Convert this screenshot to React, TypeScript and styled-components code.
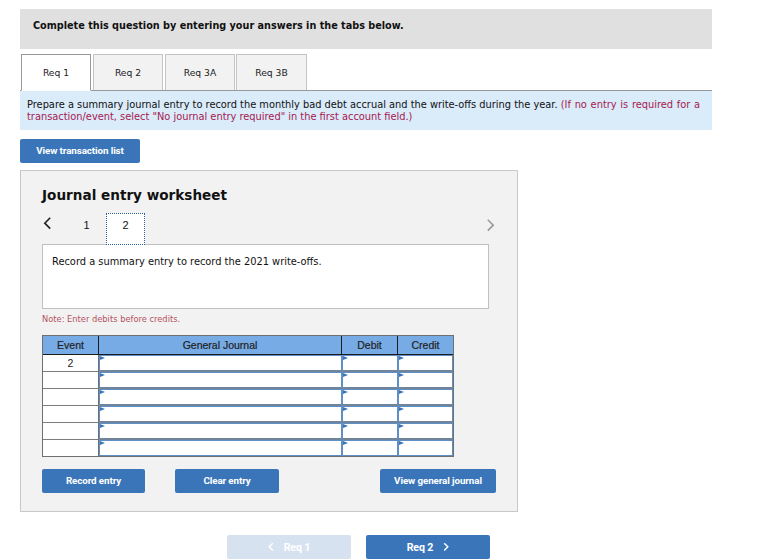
import React from "react";
import styled, { createGlobalStyle } from "styled-components";

const Global = createGlobalStyle`
  html, body { margin: 0; padding: 0; background: #fff; }
  body { font-family: "DejaVu Sans", Verdana, sans-serif; color: #111; }
`;

const Page = styled.div`
  width: 692px;
  padding: 9px 0 0 20px;
`;

const Banner = styled.div`
  height: 40px;
  box-sizing: border-box;
  background: #e0e0e0;
  padding: 10px 13px;
  font-size: 9.69px;
  line-height: 13px;
  font-weight: 700;
  white-space: nowrap;
`;

const TabBar = styled.div`
  display: flex;
  gap: 2px;
  margin-top: 5px;
  padding-left: 1px;
  height: 37px;
  box-sizing: border-box;
  border-bottom: 1px solid #999;
`;

const Tab = styled.div<{ $active?: boolean; $w: number; $tight?: boolean }>`
  width: ${(p) => p.$w}px;
  margin-left: ${(p) => (p.$tight ? "-1px" : "0")};
  box-sizing: border-box;
  display: flex;
  align-items: center;
  justify-content: center;
  font-size: 9.2px;
  color: #222;
  background: ${(p) => (p.$active ? "#fff" : "#f2f2f2")};
  border: 1px solid ${(p) => (p.$active ? "#999" : "#c4c4c4")};
  border-bottom: ${(p) => (p.$active ? "1px solid #fff" : "none")};
  height: ${(p) => (p.$active ? "37px" : "36px")};
`;

const Instructions = styled.div`
  background: #daebfa;
  height: 39px;
  box-sizing: border-box;
  padding: 8px 7px 0;
  font-size: 9.83px;
  line-height: 12px;
  white-space: nowrap;
`;

const Red = styled.span`
  color: #a5204e;
`;

const RedLead = styled.span`
  word-spacing: 0.6px;
`;

const Button = styled.button<{ $w: number; $disabled?: boolean; $nav?: boolean }>`
  width: ${(p) => p.$w}px;
  height: 24px;
  padding: ${(p) => (p.$nav ? "0" : "0 0 2px")};
  border: none;
  border-radius: 2px;
  background: ${(p) => (p.$disabled ? "#d7e2f1" : "#3a75b9")};
  color: #fff;
  font-family: "Roboto", "Liberation Sans", sans-serif;
  font-weight: 700;
  font-size: ${(p) => (p.$nav ? "10.6px" : "9.8px")};
  letter-spacing: -0.1px;
  display: flex;
  align-items: center;
  justify-content: center;
  gap: 10px;
`;

const ListRow = styled.div`
  margin-top: 9px;
`;

const Panel = styled.section`
  margin-top: 7px;
  width: 498px;
  height: 342px;
  box-sizing: border-box;
  background: #f2f2f2;
  border: 1px solid #c8c8c8;
  padding: 15px 21px 0;
`;

const Title = styled.h2`
  margin: 0;
  font-size: 13.6px;
  line-height: 18px;
  font-weight: 700;
  color: #111;
  white-space: nowrap;
`;

const Pager = styled.div`
  display: flex;
  align-items: flex-start;
  height: 32px;
  margin-top: 9px;
  position: relative;
  z-index: 1;
`;

const PagerNum = styled.div<{ $current?: boolean }>`
  width: 39px;
  height: 32px;
  box-sizing: border-box;
  display: flex;
  align-items: center;
  justify-content: center;
  padding-bottom: 8px;
  font-family: "Liberation Sans", sans-serif;
  font-size: 11px;
  background: ${(p) => (p.$current ? "#fff" : "transparent")};
  border: 1px dotted ${(p) => (p.$current ? "#2a5f9e" : "transparent")};
`;

const PagerPrev = styled.div`
  width: 25px;
  height: 20px;
  display: flex;
  align-items: center;
  padding-left: 1px;
  box-sizing: border-box;
`;

const PagerNext = styled.div`
  margin-left: auto;
  margin-right: 1px;
  height: 22px;
  display: flex;
  align-items: center;
  padding-top: 1px;
`;

const Prompt = styled.div`
  width: 447px;
  height: 65px;
  box-sizing: border-box;
  margin-top: -1px;
  background: #fff;
  border: 1px solid #c0c0c0;
  padding: 10px 9px;
  font-size: 9.85px;
  line-height: 13px;
  white-space: nowrap;
`;

const Note = styled.div`
  margin-top: 5px;
  font-size: 8.3px;
  line-height: 10px;
  color: #b5535f;
  white-space: nowrap;
`;

const Table = styled.table`
  margin-top: 11px;
  width: 412px;
  table-layout: fixed;
  border-collapse: separate;
  border-spacing: 0;
  border: 1px solid #6f6f6f;
  font-family: "Liberation Sans", sans-serif;
`;

const Head = styled.th<{ $w: number; $last?: boolean }>`
  box-sizing: border-box;
  width: ${(p) => p.$w}px;
  height: 19px;
  padding: 0;
  background: #76abe6;
  font-size: 10.5px;
  font-weight: 400;
  color: #222;
  -webkit-text-stroke: 0.2px #222;
  border-bottom: 1px solid #1c1c1c;
  border-right: ${(p) => (p.$last ? "none" : "1px solid #1c1c1c")};
`;

const EventCell = styled.td<{ $last?: boolean }>`
  height: 16px;
  padding: 0;
  background: #fff;
  text-align: center;
  font-size: 10.5px;
  color: #222;
  border-right: 1px solid #6f6f6f;
  border-bottom: ${(p) => (p.$last ? "none" : "1px solid #7c7c7c")};
`;

const EntryCell = styled.td<{ $last?: boolean }>`
  position: relative;
  height: 16px;
  padding: 0;
  background: #fff;
  box-sizing: border-box;
  border-style: solid;
  border-color: #5f8fc4;
  border-width: 1px;
  border-bottom: ${(p) => (p.$last ? "1px solid #5f8fc4" : "2px solid #72849a")};
`;

const Marker = styled.span`
  position: absolute;
  left: 0;
  top: 0;
  width: 0;
  height: 0;
  border-left: 5px solid #3a75b9;
  border-top: 2.5px solid transparent;
  border-bottom: 2.5px solid transparent;
`;

const Actions = styled.div`
  display: flex;
  margin-top: 12px;
  width: 454px;
`;

const ClearWrap = styled.div`
  margin-left: 30px;
`;

const ViewWrap = styled.div`
  margin-left: auto;
`;

const BottomNav = styled.nav`
  display: flex;
  gap: 15px;
  margin-top: 23px;
  padding-left: 207px;
`;

const Chevron = ({ dir, color, w, sw }: { dir: "l" | "r"; color: string; w: number; sw: number }) => (
  <svg width={w} height={w * 1.6} viewBox="0 0 10 16" fill="none" stroke={color} strokeWidth={sw}>
    <path d={dir === "l" ? "M8 2 L2 8 L8 14" : "M2 2 L8 8 L2 14"} />
  </svg>
);

const rows = [0, 1, 2, 3, 4, 5];

export default function App() {
  return (
    <Page>
      <Global />
      <Banner>Complete this question by entering your answers in the tabs below.</Banner>
      <TabBar>
        <Tab $active $w={70}>Req 1</Tab>
        <Tab $w={70}>Req 2</Tab>
        <Tab $w={70}>Req 3A</Tab>
        <Tab $w={71} $tight>Req 3B</Tab>
      </TabBar>
      <Instructions>
        Prepare a summary journal entry to record the monthly bad debt accrual and the write-offs during the year.{" "}
        <Red>
          <RedLead>(If no entry is required for a</RedLead>
          <br />
          transaction/event, select "No journal entry required" in the first account field.)
        </Red>
      </Instructions>
      <ListRow>
        <Button $w={120}>View transaction list</Button>
      </ListRow>
      <Panel>
        <Title>Journal entry worksheet</Title>
        <Pager>
          <PagerPrev>
            <Chevron dir="l" color="#222" w={9} sw={1.8} />
          </PagerPrev>
          <PagerNum>1</PagerNum>
          <PagerNum $current>2</PagerNum>
          <PagerNext>
            <Chevron dir="r" color="#9a9a9a" w={9} sw={1.8} />
          </PagerNext>
        </Pager>
        <Prompt>Record a summary entry to record the 2021 write-offs.</Prompt>
        <Note>Note: Enter debits before credits.</Note>
        <Table>
          <thead>
            <tr>
              <Head $w={56}>Event</Head>
              <Head $w={243}>General Journal</Head>
              <Head $w={56}>Debit</Head>
              <Head $w={55} $last>Credit</Head>
            </tr>
          </thead>
          <tbody>
            {rows.map((r) => (
              <tr key={r}>
                <EventCell $last={r === 5}>{r === 0 ? "2" : ""}</EventCell>
                <EntryCell $last={r === 5}><Marker /></EntryCell>
                <EntryCell $last={r === 5}><Marker /></EntryCell>
                <EntryCell $last={r === 5}><Marker /></EntryCell>
              </tr>
            ))}
          </tbody>
        </Table>
        <Actions>
          <Button $w={103}>Record entry</Button>
          <ClearWrap>
            <Button $w={104}>Clear entry</Button>
          </ClearWrap>
          <ViewWrap>
            <Button $w={116}>View general journal</Button>
          </ViewWrap>
        </Actions>
      </Panel>
      <BottomNav>
        <Button $w={124} $disabled $nav>
          <Chevron dir="l" color="#fff" w={6} sw={2.4} />
          Req 1
        </Button>
        <Button $w={124} $nav>
          Req 2
          <Chevron dir="r" color="#fff" w={6} sw={2.4} />
        </Button>
      </BottomNav>
    </Page>
  );
}
